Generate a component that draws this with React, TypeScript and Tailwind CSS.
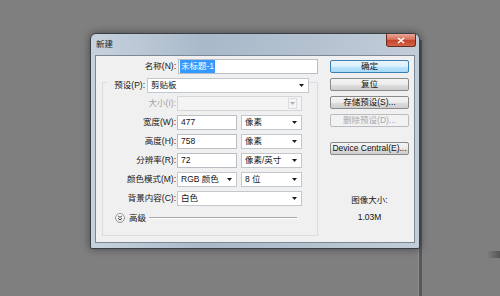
import React from "react";

const font = { fontFamily: '"Liberation Sans", "Noto Sans CJK SC", sans-serif' };

function Tri({ color = "#1a1a1a" }: { color?: string }) {
  return (
    <svg width="5" height="3" viewBox="0 0 5 3" className="shrink-0">
      <polygon points="0,0 5,0 2.5,3" fill={color} />
    </svg>
  );
}

function Select({ text, w, disabled }: { text?: string; w: string; disabled?: boolean }) {
  return (
    <div
      className={`${w} h-[15px] flex items-center justify-between pl-[3px] pr-[4px] border ${
        disabled ? "border-[#d3d6da] bg-[#f4f4f4]" : "border-[#c3c8ce] bg-white"
      }`}
    >
      <span className="leading-none">{text}</span>
      {disabled ? (
        <div className="w-[9px] h-[11px] border border-[#dadcdf] flex items-center justify-center">
          <Tri color="#b0b0b0" />
        </div>
      ) : (
        <Tri />
      )}
    </div>
  );
}

function Input({ text, w }: { text: string; w: string }) {
  return (
    <div className={`${w} h-[15px] flex items-center pl-[3px] border border-[#b9bec4] bg-white`}>
      <span className="leading-none">{text}</span>
    </div>
  );
}

function Row({ label, children, disabled }: { label: string; children: React.ReactNode; disabled?: boolean }) {
  return (
    <div className="flex items-center h-[15px] mt-[4px]">
      <div className={`w-[73px] text-right leading-none ${disabled ? "text-[#a3a3a3]" : ""}`}>{label}</div>
      <div className="ml-[1px] flex items-center gap-[4px]">{children}</div>
    </div>
  );
}

function Btn({ label, def, disabled, mt }: { label: string; def?: boolean; disabled?: boolean; mt: string }) {
  const cls = def
    ? "border-[#3c7fb1] bg-[linear-gradient(#eaf6fd_0%,#d9f0fc_50%,#bee6fd_51%,#a7d9f5_100%)] text-[#111]"
    : disabled
    ? "border-[#b8bcc0] bg-[#f2f2f2] text-[#a8a8a8]"
    : "border-[#8a8a8a] bg-[linear-gradient(#f4f4f4_0%,#ebebeb_50%,#dddddd_51%,#cfcfcf_100%)] text-[#111]";
  return (
    <div className={`${mt} w-[79px] h-[13px] rounded-[2px] border flex items-center justify-center leading-none ${cls}`}>
      {label}
    </div>
  );
}

export default function App() {
  return (
    <div
      className="relative w-[500px] h-[296px] overflow-hidden bg-[#7f7f7f] pt-[33px] pl-[90px] text-[8.5px] text-[#141414]"
      style={font}
    >
      {/* canvas edge line behind dialog */}
      <div className="absolute left-[418px] top-[40px] bottom-0 w-[4px] flex">
        <div className="w-[1px] bg-[#8e8e8e]" />
        <div className="w-[3px] bg-[#545a60]" />
      </div>
      <div className="absolute left-[488px] top-[251px] w-[12px] h-[7px] bg-[linear-gradient(90deg,#7a7a7a,#565656)]" />

      {/* dialog */}
      <div className="relative w-[330px] h-[216px] flex flex-col rounded-t-[6px] rounded-b-[2px] border border-[#3a4047] bg-[linear-gradient(90deg,#c7d2dd_0%,#a9b9ca_35%,#b3c1cf_65%,#c2cdd8_100%)] shadow-[0_0_8px_rgba(0,0,0,0.45)]">
        <div className="h-[21px] flex items-start justify-between">
          <span className="mt-[6px] ml-[5px] text-[8.5px] leading-none text-[#1b1b1b]">新建</span>
          <div className="mr-[3px] w-[30px] h-[13px] rounded-b-[3px] border border-t-0 border-[#6b2a1e] bg-[linear-gradient(#e8a595_0%,#d7725c_45%,#c4432a_55%,#d0664c_100%)] flex items-center justify-center">
            <svg width="8" height="7" viewBox="0 0 8 7">
              <path d="M1 1 L7 6 M7 1 L1 6" stroke="white" strokeWidth="1.6" />
            </svg>
          </div>
        </div>

        <div className="mx-[4px] w-[320px] h-[188px] border border-[#7c8896] bg-[#f0f0f0] flex">
          {/* left */}
          <div className="w-[226px] flex flex-col">
            <div className="mt-[3px] flex items-center h-[15px]">
              <div className="w-[80px] text-right leading-none">名称(N):</div>
              <div className="ml-[2px] w-[140px] h-[15px] flex items-center pl-[1px] border border-[#b9bec4] bg-white">
                <span className="bg-[#3399ff] text-white leading-none px-[1px] py-[2px]">未标题-1</span>
              </div>
            </div>

            <div className="mt-[8px] ml-[6px] w-[216px] h-[154px] border border-[#d7dde3] flex flex-col">
              <div className="-mt-[5px] flex items-center h-[15px]">
                <div className="ml-[4px] w-[40px] h-[15px] bg-[#f0f0f0] flex items-center justify-end pr-[2px] leading-none">
                  预设(P):
                </div>
                <Select text="剪贴板" w="w-[162px]" />
              </div>
              <div className="-mt-[1px]">
                <Row label="大小(I):" disabled>
                  <Select w="w-[125px]" disabled />
                </Row>
              </div>
              <Row label="宽度(W):">
                <Input text="477" w="w-[60px]" />
                <Select text="像素" w="w-[61px]" />
              </Row>
              <Row label="高度(H):">
                <Input text="758" w="w-[60px]" />
                <Select text="像素" w="w-[61px]" />
              </Row>
              <Row label="分辨率(R):">
                <Input text="72" w="w-[60px]" />
                <Select text="像素/英寸" w="w-[61px]" />
              </Row>
              <Row label="颜色模式(M):">
                <Select text="RGB 颜色" w="w-[60px]" />
                <Select text="8 位" w="w-[61px]" />
              </Row>
              <Row label="背景内容(C):">
                <Select text="白色" w="w-[125px]" />
              </Row>
              <div className="mt-[6px] h-[12px] flex items-center">
                <div className="ml-[12px] w-[10px] h-[10px] rounded-full border border-[#9a9a9a] bg-[linear-gradient(#ffffff,#e4e4e4)] flex items-center justify-center">
                  <svg width="6" height="6" viewBox="0 0 6 6">
                    <path d="M1 0.8 L3 2.4 L5 0.8 M1 3.3 L3 4.9 L5 3.3" stroke="#333" strokeWidth="0.9" fill="none" />
                  </svg>
                </div>
                <span className="ml-[4px] leading-none">高级</span>
                <div className="ml-[3px] w-[148px] h-[2px] border-t border-b border-t-[#a8a8a8] border-b-white" />
              </div>
            </div>
          </div>

          {/* right */}
          <div className="ml-[8px] w-[79px] flex flex-col items-center">
            <Btn label="确定" def mt="mt-[4px]" />
            <Btn label="复位" mt="mt-[5px]" />
            <Btn label="存储预设(S)..." mt="mt-[5px]" />
            <Btn label="删除预设(D)..." disabled mt="mt-[5px]" />
            <Btn label="Device Central(E)..." mt="mt-[15px]" />
            <div className="mt-[41px] leading-none">图像大小:</div>
            <div className="mt-[8px] leading-none">1.03M</div>
          </div>
        </div>
      </div>
    </div>
  );
}
